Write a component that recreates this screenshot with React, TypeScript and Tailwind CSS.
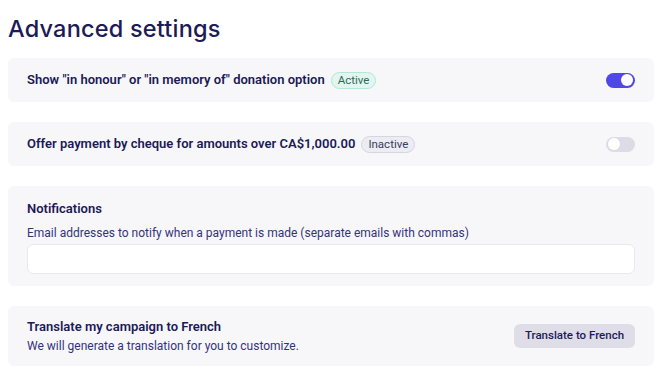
import { useState } from "react";

function Toggle({ on, onChange }: { on: boolean; onChange: () => void }) {
  return (
    <button
      type="button"
      onClick={onChange}
      className={`flex h-[15px] w-[29px] shrink-0 items-center rounded-full px-[2px] ${
        on ? "justify-end bg-[#5048e5]" : "justify-start bg-[#dcdbe6]"
      }`}
    >
      <span className="h-[12px] w-[12px] rounded-full bg-white" />
    </button>
  );
}

export default function App() {
  const [honour, setHonour] = useState(true);
  const [cheque, setCheque] = useState(false);

  return (
    <div
      className="min-h-[389px] bg-white pt-[13px] pr-4 pl-2 text-[#1c1a57]"
      style={{ fontFamily: "Roboto, 'Liberation Sans', sans-serif" }}
    >
      <h1 className="mb-[13px] font-['Inter',sans-serif] text-[23.5px] leading-[32px] font-medium tracking-[0.2px]">
        Advanced settings
      </h1>

      <div className="flex flex-col gap-5">
        <div className="flex h-[44px] items-center justify-between rounded-md bg-[#f7f7fa] px-[19px]">
          <div className="flex items-center gap-[6px]">
            <span className="text-[13px] font-semibold">
              Show "in honour" or "in memory of" donation option
            </span>
            <span className="rounded-full border border-[#b4e6d6] bg-[#e2f6ef] px-[6px] text-[11.5px] leading-[15px] text-[#2f6a59]">
              Active
            </span>
          </div>
          <Toggle on={honour} onChange={() => setHonour(!honour)} />
        </div>

        <div className="flex h-[44px] items-center justify-between rounded-md bg-[#f7f7fa] px-[19px]">
          <div className="flex items-center gap-[6px]">
            <span className="text-[13px] font-semibold">
              Offer payment by cheque for amounts over CA$1,000.00
            </span>
            <span className="rounded-full border border-[#d6d5e2] bg-[#ececf3] px-[6px] text-[11.5px] leading-[15px] text-[#3b3a60]">
              Inactive
            </span>
          </div>
          <Toggle on={cheque} onChange={() => setCheque(!cheque)} />
        </div>

        <div className="rounded-md bg-[#f7f7fa] px-[19px] pt-3 pb-3">
          <h2 className="text-[13px] leading-[22px] font-semibold">Notifications</h2>
          <p className="mt-[3px] text-[12px] leading-[20px] text-[#34337a]">
            Email addresses to notify when a payment is made (separate emails with commas)
          </p>
          <input
            type="text"
            className="mt-px block h-[30px] w-full rounded-md border border-[#e8e8ef] bg-white px-2 text-[12px] outline-none"
          />
        </div>

        <div className="flex items-center justify-between rounded-md bg-[#f7f7fa] px-[19px] py-[11px]">
          <div>
            <h2 className="text-[13px] leading-[20px] font-semibold">
              Translate my campaign to French
            </h2>
            <p className="text-[12px] leading-[18px] text-[#34337a]">
              We will generate a translation for you to customize.
            </p>
          </div>
          <button
            type="button"
            className="h-[24px] w-[121px] rounded-md bg-[#dedde8] text-[11.5px] font-medium text-[#1c1a57]"
          >
            Translate to French
          </button>
        </div>
      </div>
    </div>
  );
}
